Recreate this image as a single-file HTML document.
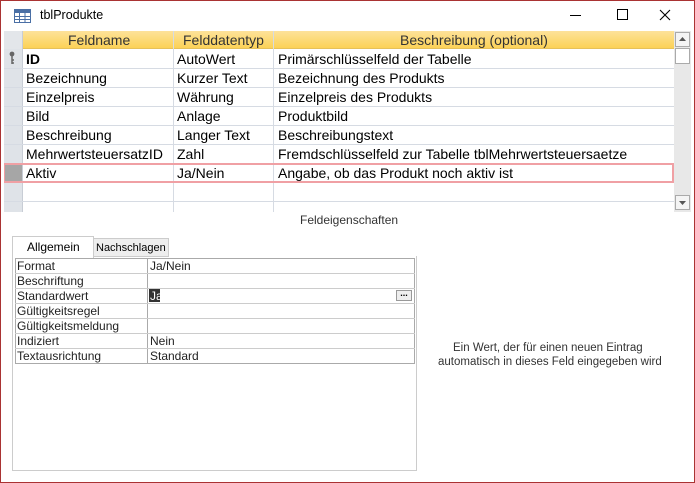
<!DOCTYPE html>
<html><head><meta charset="utf-8"><style>
*{margin:0;padding:0;box-sizing:border-box}
body{width:695px;height:483px;overflow:hidden;background:#fff;font-family:"Liberation Sans",sans-serif;position:relative}
.win{position:absolute;left:0;top:0;width:695px;height:483px;border:1px solid #a33}
.abs{position:absolute}
.t{position:absolute;white-space:nowrap;font-size:14px;color:#000}
.s{position:absolute;white-space:nowrap;font-size:12px;color:#222}
</style></head><body>
<div class="win"></div>
<svg class="abs" style="left:14px;top:9px" width="17" height="14"><rect x=".5" y=".5" width="16" height="13" fill="#fff" stroke="#4a6fa5"/><rect x="1" y="1" width="15" height="3" fill="#4a6fa5"/><path d="M1 7.5H16M1 10.5H16M5.5 4V13M11 4V13" stroke="#4a6fa5"/></svg>
<div class="t" style="left:40px;top:8px;font-size:12.5px">tblProdukte</div>
<div class="abs" style="left:570px;top:15px;width:11px;height:1px;background:#000"></div>
<div class="abs" style="left:617px;top:9px;width:11px;height:11px;border:1px solid #000"></div>
<svg class="abs" style="left:659px;top:9px" width="12" height="12"><path d="M1 1L11 11M11 1L1 11" stroke="#000" stroke-width="1.1"/></svg>
<div class="abs" style="left:4px;top:31px;width:670px;height:181px;background:#fff"></div>
<div class="abs" style="left:4px;top:31px;width:19px;height:181px;background:#dfe3e8"></div>
<div class="abs" style="left:23px;top:31px;width:651px;height:18px;background:linear-gradient(#fde29a,#fcd257);border-bottom:1px solid #e6c15a"></div>
<div class="abs" style="left:4px;top:31px;width:19px;height:18px;background:#e3e6ea"></div>
<div class="t" style="left:68px;top:32px;color:#333">Feldname</div>
<div class="t" style="left:183px;top:32px;color:#333">Felddatentyp</div>
<div class="t" style="left:400px;top:32px;color:#333">Beschreibung (optional)</div>
<div class="abs" style="left:173px;top:31px;width:1px;height:181px;background:#d6dbe3"></div>
<div class="abs" style="left:273px;top:31px;width:1px;height:181px;background:#d6dbe3"></div>
<div class="abs" style="left:22px;top:31px;width:1px;height:181px;background:#c8cdd5"></div>
<div id="rows"></div>
<div class="abs" style="left:4px;top:163px;width:670px;height:20px;border:2px solid #f0a0a4"></div>
<div class="abs" style="left:5px;top:165px;width:17px;height:16px;background:#a6a6a6"></div>
<svg class="abs" style="left:9px;top:51px" width="6" height="14"><circle cx="3" cy="3" r="2.4" fill="#666"/><path d="M3 5V13M3 9H5M3 12H5" stroke="#666" stroke-width="1.5"/></svg>
<div class="abs" style="left:674px;top:31px;width:17px;height:181px;background:#e8e8e8"></div>
<div class="abs" style="left:675px;top:32px;width:15px;height:15px;background:#f4f4f4;border:1px solid #aaa"></div>
<div class="abs" style="left:675px;top:48px;width:15px;height:16px;background:#fff;border:1px solid #aaa"></div>
<div class="abs" style="left:675px;top:195px;width:15px;height:15px;background:#f4f4f4;border:1px solid #aaa"></div>
<svg class="abs" style="left:678px;top:36px" width="9" height="6"><path d="M1 5L4.5 1L8 5Z" fill="#555"/></svg>
<svg class="abs" style="left:678px;top:200px" width="9" height="6"><path d="M1 1L4.5 5L8 1Z" fill="#555"/></svg>
<div class="s" style="left:300px;top:213px;color:#333">Feldeigenschaften</div>
<div class="abs" style="left:12px;top:236px;width:82px;height:22px;background:#fff;border:1px solid #ccc;border-bottom:none"></div>
<div class="s" style="left:27px;top:240px;color:#000">Allgemein</div>
<div class="abs" style="left:93px;top:238px;width:76px;height:19px;background:#eee;border:1px solid #ccc"></div>
<div class="s" style="left:96px;top:242px;color:#000;font-size:11px">Nachschlagen</div>
<div class="abs" style="left:12px;top:256px;width:405px;height:215px;border:1px solid #ccc;border-top:none"></div>
<div class="abs" style="left:15px;top:258px;width:400px;height:106px;border:1px solid #aaa"></div>
<div class="abs" style="left:147px;top:258px;width:1px;height:106px;background:#aaa"></div>
<div id="props"></div>
<div class="abs" style="left:149px;top:289px;width:11px;height:13px;background:#333"></div>
<div class="s" style="left:150px;top:289px;color:#fff">Ja</div>
<div class="abs" style="left:396px;top:290px;width:16px;height:11px;background:#eee;border:1px solid #999;font-size:9px;line-height:5px;text-align:center;font-weight:bold">...</div>
<div class="s" style="left:453px;top:342px;color:#333;font-size:11.5px">Ein Wert, der für einen neuen Eintrag</div>
<div class="s" style="left:438px;top:356px;color:#333;font-size:11.5px">automatisch in dieses Feld eingegeben wird</div>
<script>
var r=[["ID","AutoWert","Primärschlüsselfeld der Tabelle",1],["Bezeichnung","Kurzer Text","Bezeichnung des Produkts"],["Einzelpreis","Währung","Einzelpreis des Produkts"],["Bild","Anlage","Produktbild"],["Beschreibung","Langer Text","Beschreibungstext"],["MehrwertsteuersatzID","Zahl","Fremdschlüsselfeld zur Tabelle tblMehrwertsteuersaetze"],["Aktiv","Ja/Nein","Angabe, ob das Produkt noch aktiv ist"],["","",""]];
var h="";r.forEach(function(a,i){var y=49+i*19;h+='<div class="abs" style="left:4px;top:'+(y+19)+'px;width:670px;height:1px;background:#d6dbe3"></div>';var b=a[3]?'font-weight:bold;':'';h+='<div class="t" style="'+b+'left:26px;top:'+(y+2)+'px">'+a[0]+'</div><div class="t" style="left:177px;top:'+(y+2)+'px">'+a[1]+'</div><div class="t" style="left:278px;top:'+(y+2)+'px">'+a[2]+'</div>'});
document.getElementById('rows').innerHTML=h;
var p=[["Format","Ja/Nein"],["Beschriftung",""],["Standardwert",""],["Gültigkeitsregel",""],["Gültigkeitsmeldung",""],["Indiziert","Nein"],["Textausrichtung","Standard"]];
h="";p.forEach(function(a,i){var y=258+i*15;if(i)h+='<div class="abs" style="left:15px;top:'+y+'px;width:400px;height:1px;background:#ccc"></div>';h+='<div class="s" style="left:17px;top:'+(y+1)+'px">'+a[0]+'</div><div class="s" style="left:150px;top:'+(y+1)+'px">'+a[1]+'</div>'});
document.getElementById('props').innerHTML=h;
</script>
</body></html>
